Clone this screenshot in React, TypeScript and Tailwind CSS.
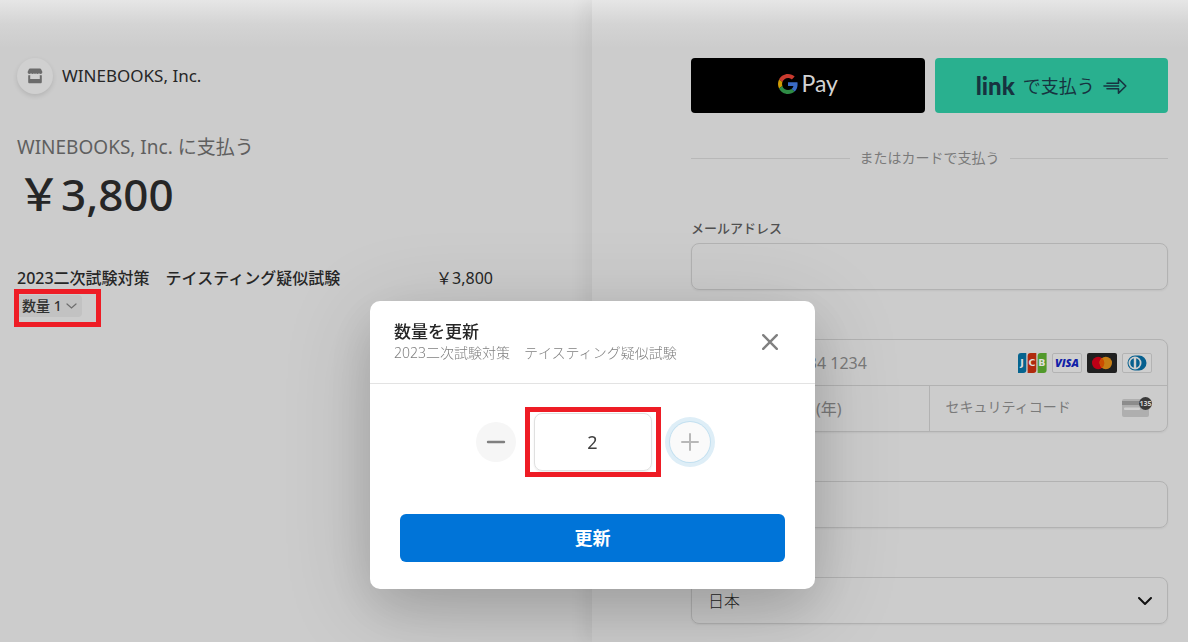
import { useState } from "react";
import type { ReactNode } from "react";

const fieldBox =
  "block h-[47px] w-full rounded-lg border border-[#b2b2b2] bg-transparent px-4 text-base text-[#262626] shadow-[0_1px_2px_rgba(0,0,0,0.06)] outline-none placeholder:text-[#7a7a7a]";

function Store() {
  return (
    <svg width="16" height="16" viewBox="0 0 16 16" fill="#6b6b6b" aria-hidden="true">
      <path d="M3 .5h10c.5 0 .8.2 1 .6l1.300 2.600c.3 1.200-.5 2.300-1.700 2.300-.7 0-1.300-.3-1.600-.8-.4.5-.9.8-1.500.8S9.300 5.700 9 5.200C8.700 5.700 8.500 6 8 6s-.7-.3-1-.8C6.700 5.700 6.100 6 5.500 6S4.400 5.700 4 5.200C3.700 5.700 3.100 6 2.400 6 1.200 6 .4 4.900.7 3.700L2 1.100c.2-.4.5-.6 1-.6z" />
      <path d="M1.200 7.200c.8.1 1.400 0 2-.3V11h9.600V6.900c.6.300 1.200.4 2 .3V14c0 .8-.5 1.300-1.300 1.300h-11c-.8 0-1.300-.5-1.300-1.300z" />
    </svg>
  );
}

function GoogleG() {
  return (
    <svg width="20" height="20" viewBox="0 0 48 48" aria-hidden="true">
      <path fill="#c93a2e" d="M24 9.500c3.540 0 6.710 1.220 9.210 3.600l6.850-6.850C35.900 2.380 30.470 0 24 0 14.620 0 6.510 5.380 2.560 13.220l7.980 6.190C12.430 13.720 17.740 9.500 24 9.500z" />
      <path fill="#3a6bc6" d="M46.980 24.550c0-1.570-.15-3.090-.38-4.550H24v9.020h12.940c-.58 2.960-2.260 5.480-4.780 7.180l7.730 6c4.510-4.180 7.090-10.360 7.090-17.650z" />
      <path fill="#d09c05" d="M10.530 28.590c-.48-1.450-.76-2.990-.76-4.590s.27-3.140.76-4.590l-7.980-6.190C.92 16.460 0 20.120 0 24c0 3.880.92 7.540 2.560 10.780l7.970-6.190z" />
      <path fill="#2e8b45" d="M24 48c6.480 0 11.930-2.130 15.890-5.810l-7.730-6c-2.150 1.450-4.920 2.300-8.160 2.300-6.260 0-11.570-4.220-13.470-9.910l-7.980 6.190C6.510 42.620 14.620 48 24 48z" />
    </svg>
  );
}

function LinkArrow() {
  return (
    <svg width="24" height="18" viewBox="0 0 24 18" fill="none" stroke="#173340" strokeWidth="1.600" strokeLinejoin="round" strokeLinecap="round" aria-hidden="true">
      <path d="M4 6.200h11.500V1.800L22.800 9l-7.300 7.200v-4.400H4M1 9h14.500" />
    </svg>
  );
}

function Jcb() {
  return (
    <svg width="30" height="20" viewBox="0 0 30 20" role="img" aria-label="JCB">
      <path d="M4 0h5.300v17a3 3 0 0 1-3 3H1V3a3 3 0 0 1 3-3z" fill="#06648f" />
      <path d="M13.600 0h5.700v17a3 3 0 0 1-3 3h-5.700V3a3 3 0 0 1 3-3z" fill="#b02a0d" />
      <path d="M23.600 0h6v17a3 3 0 0 1-3 3h-6V3a3 3 0 0 1 3-3z" fill="#51992b" />
      <g fill="#dedede" fontFamily="DejaVu Sans, sans-serif" fontSize="9.500" fontWeight="700" textAnchor="middle">
        <text x="5" y="13.400">J</text>
        <text x="15" y="13.400">C</text>
        <text x="24.800" y="13.400">B</text>
      </g>
    </svg>
  );
}

function Visa() {
  return (
    <svg width="30" height="20" viewBox="0 0 30 20" role="img" aria-label="Visa">
      <rect x=".5" y=".5" width="29" height="19" rx="1.500" fill="#cfcfcf" stroke="#b3b3b3" />
      <text x="15" y="14" textAnchor="middle" fill="#111fa8" fontFamily="Open Sans, sans-serif" fontSize="11" fontStyle="italic" fontWeight="800">VISA</text>
    </svg>
  );
}

function Mastercard() {
  return (
    <svg width="30" height="20" viewBox="0 0 30 20" role="img" aria-label="Mastercard">
      <rect width="30" height="20" rx="2" fill="#202020" />
      <circle cx="11.200" cy="10" r="6.200" fill="#bd0016" />
      <circle cx="18.800" cy="10" r="6.200" fill="#c67e15" />
      <path d="M15 5.100a6.200 6.200 0 0 1 0 9.800 6.200 6.200 0 0 1 0-9.800z" fill="#cc4c00" />
    </svg>
  );
}

function Diners() {
  return (
    <svg width="30" height="20" viewBox="0 0 30 20" role="img" aria-label="Diners Club">
      <rect x=".5" y=".5" width="29" height="19" rx="1.500" fill="#cfcfcf" stroke="#b3b3b3" />
      <path d="M13 2.500h4a7.500 7.500 0 0 1 0 15h-4a7.500 7.500 0 0 1 0-15z" fill="#06608f" />
      <circle cx="13" cy="10" r="6.500" fill="#cfcfcf" />
      <path d="M11.800 5.300v9.400a4.900 4.900 0 0 1 0-9.400zM14.200 5.300a4.900 4.900 0 0 1 0 9.400z" fill="#06608f" />
    </svg>
  );
}

function CvcCard() {
  return (
    <svg width="30" height="22" viewBox="0 0 30 22" aria-hidden="true">
      <rect y="3" width="27" height="18" rx="2" fill="#afafaf" />
      <rect y="5" width="27" height="4" fill="#8c8c8c" />
      <rect x="2" y="11.500" width="16" height="2.500" rx="1" fill="#cfcfcf" />
      <circle cx="23.500" cy="7.500" r="6.500" fill="#3a3a3a" />
      <text x="23.500" y="10.200" textAnchor="middle" fill="#d6d6d6" fontFamily="Open Sans, sans-serif" fontSize="7" fontWeight="700">135</text>
    </svg>
  );
}

function Label({ htmlFor, children }: { htmlFor: string; children: ReactNode }) {
  return (
    <label htmlFor={htmlFor} className="mb-[5px] block text-[13px] leading-5 font-medium text-[#505050]">
      {children}
    </label>
  );
}

function Summary() {
  return (
    <section className="px-[17px] pt-[58px] pr-[99px]">
      <div className="flex items-center gap-[9px]">
        <span className="flex size-9 items-center justify-center rounded-full bg-[#d0d0d0] shadow-[0_2px_5px_rgba(0,0,0,0.12)]">
          <Store />
        </span>
        <span className="text-[17px] leading-6 text-[#262626]">WINEBOOKS, Inc.</span>
      </div>
      <h1 className="mt-[39px] text-[19px] leading-7 text-[#5f5f5f]">WINEBOOKS, Inc. に支払う</h1>
      <p className="mt-1 text-[44px] leading-[58px] font-medium text-[#262626]">￥3,800</p>
      <div className="mt-[43px] flex justify-between text-base leading-6 font-medium whitespace-nowrap text-[#262626]">
        <span>2023二次試験対策　テイスティング疑似試験</span>
        <span className="font-normal">￥3,800</span>
      </div>
      <div className="relative mt-[5px] inline-block">
        <button className="flex h-[22px] items-center gap-1 rounded bg-[#c2c2c2] px-[5px] text-sm font-medium text-[#303030]">
          数量 1
          <svg width="11" height="6" viewBox="0 0 11 6" fill="none" stroke="#6d6d6d" strokeWidth="1.200" strokeLinecap="round" aria-hidden="true">
            <path d="M1 1l4.500 4L10 1" />
          </svg>
        </button>
        <span className="pointer-events-none absolute -top-1.5 -left-[3px] h-[38px] w-[87px] border-[5px] border-[#ee1c25]" />
      </div>
    </section>
  );
}

function Payment() {
  return (
    <section className="pt-[58px] pr-5 pb-[19px] pl-[99px] shadow-[-8px_0_16px_rgba(0,0,0,0.06)]">
      <div className="grid grid-cols-2 gap-2.5">
        <button className="flex h-[55px] items-center justify-center gap-1 rounded bg-black pb-1 font-[Lato,sans-serif] text-[23px] text-[#d3d3d3]">
          <GoogleG />
          Pay
        </button>
        <button className="flex h-[55px] items-center justify-center gap-2 rounded bg-[#29b08f] text-lg text-[#173340]">
          <span className="font-[Lato,sans-serif] text-2xl leading-7 font-black">link</span>
          で支払う
          <LinkArrow />
        </button>
      </div>
      <div className="mt-[35px] flex items-center gap-2.5 text-sm leading-5 text-[#7a7a7a]">
        <span className="h-px flex-1 bg-[#b8b8b8]" />
        またはカードで支払う
        <span className="h-px flex-1 bg-[#b8b8b8]" />
      </div>
      <form className="mt-[50px] flex flex-col gap-6" onSubmit={(e) => e.preventDefault()}>
        <div>
          <Label htmlFor="email">メールアドレス</Label>
          <input id="email" type="email" className={fieldBox} />
        </div>
        <div>
          <Label htmlFor="card">カード情報</Label>
          <div className="rounded-lg border border-[#b2b2b2] shadow-[0_1px_2px_rgba(0,0,0,0.06)]">
            <div className="flex h-[46px] items-center border-b border-[#b2b2b2] pr-[15px] pl-4">
              <input id="card" placeholder="1234 1234 1234 1234" className="min-w-0 flex-1 bg-transparent text-base outline-none placeholder:text-[#7a7a7a]" />
              <span className="flex gap-[5px]">
                <Jcb />
                <Visa />
                <Mastercard />
                <Diners />
              </span>
            </div>
            <div className="grid h-[45px] grid-cols-2">
              <input aria-label="有効期限" placeholder="有効期限 (月) / (年)" className="min-w-0 border-r border-[#b2b2b2] bg-transparent px-4 text-base outline-none placeholder:text-[#7a7a7a]" />
              <div className="flex items-center pr-[15px] pb-1 pl-4">
                <input aria-label="セキュリティコード" placeholder="セキュリティコード" className="min-w-0 flex-1 bg-transparent text-sm outline-none placeholder:text-[#7a7a7a]" />
                <CvcCard />
              </div>
            </div>
          </div>
        </div>
        <div>
          <Label htmlFor="name">カード所有者名</Label>
          <input id="name" className={fieldBox} />
        </div>
        <div>
          <Label htmlFor="country">国または地域</Label>
          <div className="relative">
            <select id="country" className={`${fieldBox} appearance-none font-light`}>
              <option>日本</option>
            </select>
            <svg className="pointer-events-none absolute top-5 right-4" width="14" height="9" viewBox="0 0 14 9" fill="none" stroke="#111" strokeWidth="2" strokeLinecap="round" strokeLinejoin="round" aria-hidden="true">
              <path d="M1 1l6 6 6-6" />
            </svg>
          </div>
        </div>
      </form>
    </section>
  );
}

function QuantityDialog() {
  const [quantity, setQuantity] = useState("2");
  const step = (by: number) => setQuantity(String(Math.max(1, (Number(quantity) || 0) + by)));
  return (
    <div className="fixed inset-0 flex items-start justify-center pt-[301px] pr-[3px]">
      <div role="dialog" aria-labelledby="dialog-title" className="w-[445px] rounded-[10px] bg-white shadow-[0_16px_90px_rgba(0,0,0,0.16),0_20px_50px_rgba(0,0,0,0.12)]">
        <header className="flex items-center justify-between border-b border-[#e3e3e3] pt-5 pr-[37px] pb-5 pl-6">
          <div>
            <h2 id="dialog-title" className="text-[17px] leading-[22px] font-medium text-[#262626]">数量を更新</h2>
            <p className="text-sm leading-5 font-light text-[#808080]">2023二次試験対策　テイスティング疑似試験</p>
          </div>
          <button aria-label="閉じる">
            <svg width="16" height="16" viewBox="0 0 16 16" fill="none" stroke="#808080" strokeWidth="2.400" strokeLinecap="round" aria-hidden="true">
              <path d="M1.200 1.200l13.600 13.600M14.800 1.200L1.200 14.800" />
            </svg>
          </button>
        </header>
        <div className="px-[30px] pt-[29px] pb-[27px]">
          <div className="flex items-center justify-center gap-[18px]">
            <button aria-label="減らす" onClick={() => step(-1)} className="flex size-10 items-center justify-center rounded-full bg-[#f6f6f6]">
              <svg width="20" height="20" viewBox="0 0 20 20" stroke="#808080" strokeWidth="2.400" strokeLinecap="round" aria-hidden="true">
                <path d="M2 10h16" />
              </svg>
            </button>
            <div className="relative">
              <input
                aria-label="数量"
                value={quantity}
                onChange={(e) => setQuantity(e.target.value)}
                className="block h-[58px] w-[118px] rounded-lg border border-[#e0e0e0] text-center text-lg text-[#404040] shadow-[0_1px_2px_rgba(0,0,0,0.08)] outline-none"
              />
              <span className="pointer-events-none absolute -inset-x-[9px] -inset-y-1.5 border-[5px] border-[#ee1c25]" />
            </div>
            <button aria-label="増やす" onClick={() => step(1)} className="flex size-10 items-center justify-center rounded-full bg-[#fafafa] shadow-[0_0_0_1px_#c3e0f0,0_0_0_5px_#deeef7]">
              <svg width="20" height="20" viewBox="0 0 20 20" stroke="#b8b8b8" strokeWidth="2" strokeLinecap="round" aria-hidden="true">
                <path d="M2 10h16M10 2v16" />
              </svg>
            </button>
          </div>
          <button className="mt-[43px] h-12 w-full rounded-md bg-[#0074d8] text-lg leading-6 font-bold text-white">更新</button>
        </div>
      </div>
    </div>
  );
}

export default function App() {
  return (
    <div className="min-h-screen bg-[#cccccc] bg-[linear-gradient(to_bottom,#e6e6e6,#d4d4d4_24px,#cccccc_48px)] font-['Noto_Sans','Noto_Sans_CJK_JP',sans-serif]">
      <main className="grid min-h-screen grid-cols-[592fr_596fr] overflow-hidden">
        <Summary />
        <Payment />
      </main>
      <QuantityDialog />
    </div>
  );
}
